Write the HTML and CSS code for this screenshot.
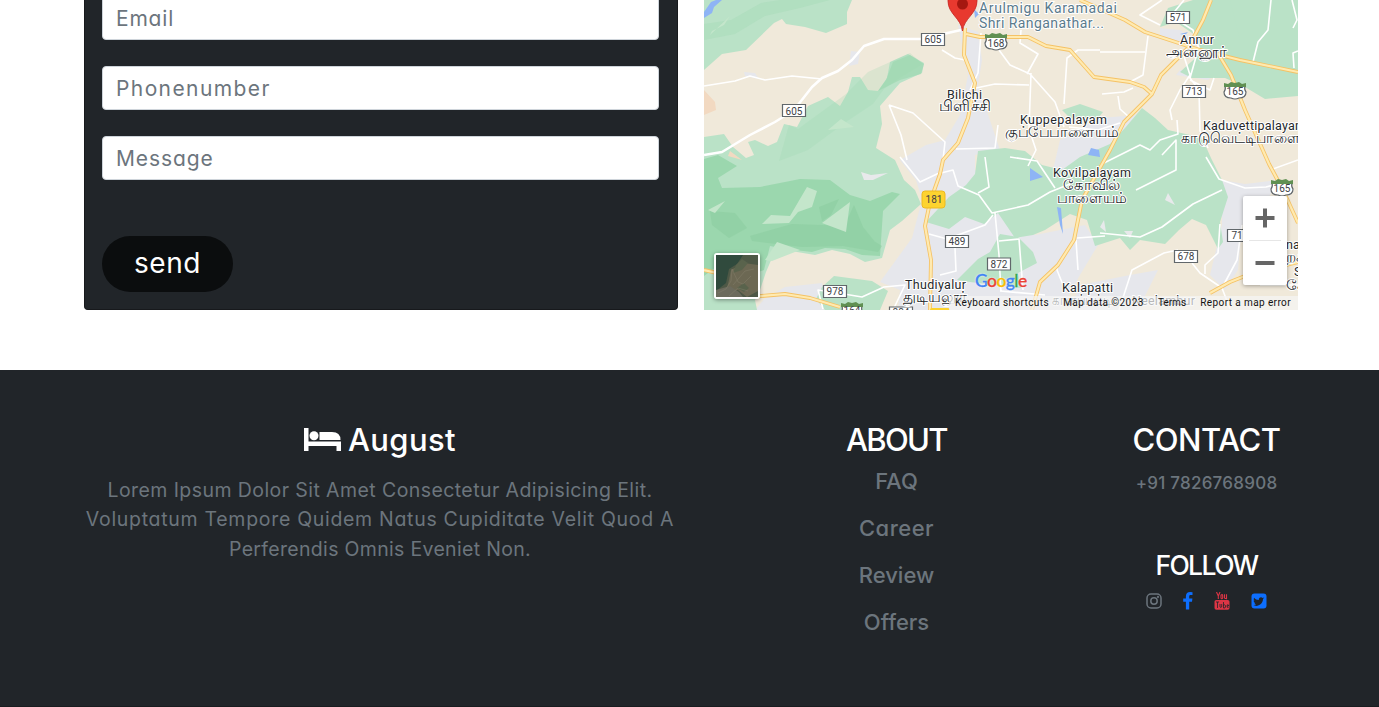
FILE: index.html
```html
<!DOCTYPE html>
<html lang="en">
<head>
<meta charset="utf-8">
<title>August</title>
<link rel="stylesheet" href="styles.css">
</head>
<body>
<main class="contact">
  <form class="contact-form">
    <input class="field field-email" type="email" placeholder="Email">
    <input class="field field-phone" type="text" placeholder="Phonenumber">
    <input class="field field-message" type="text" placeholder="Message">
    <button class="send" type="button">send</button>
  </form>
  <div class="map">
    <svg class="map-canvas" viewBox="704 0 594 310" width="594" height="310">
      <rect x="704" width="594" height="310" fill="#f0e9da"/>
      <!-- urban areas -->
      <g fill="#e6e7ec">
        <path d="M958 25L978 32 982 60 978 85 1000 150 975 155 975 170 1000 190 1035 235 1085 225 1098 245 1080 275 1060 310H898L900 290 880 282 912 238 922 200 916 180 900 160 926 145 945 140 960 115 968 75Z"/>
        <path d="M1060 140L1098 118 1140 115 1150 135 1120 165 1085 180 1052 174Z"/>
        <path d="M1222 180L1245 184 1278 180 1262 210 1242 225 1238 270 1225 290 1210 275 1222 225Z"/>
        <path d="M765 298L785 287 822 283 830 310H755Z"/><path d="M851 51l9 1-2 12-9 2zM744 72l11 1 4 6-14-3zM1080 285l50-10 28-5-20 40h-68z"/>
        <path d="M1160 28L1180 30 1196 42 1180 46 1160 36ZM1180 70l42 0-14 10-32-5z"/>
      </g>
      <!-- forest and parks -->
      <g fill="#bae2c7">
        <path d="M704 0H852L847 12 847 24 826 33 805 27 786 24 782 19 774 23 746 50 722 54 704 70Z"/>
        <path d="M704 137L724 134 733 147 746 158 754 155 748 142 755 140 768 146 777 142 784 124 797 127 808 106 828 97 840 106 848 92 852 77 860 77 868 90 878 91 887 78 890 62 908 54 924 63 922 73 900 83 880 106 882 124 876 148 895 160 904 180 915 190 921 204 902 221 890 230 882 258 865 262 850 254 832 250 815 255 785 250 772 258 766 272 760 290 755 300 757 310H704Z"/>
        <path d="M978 151L1005 148 1025 151 1042 165 1062 170 1080 157 1110 144 1125 128 1142 108 1155 118 1168 130 1190 135 1203 140 1211 158 1222 180 1228 197 1220 222 1223 242 1218 249 1206 225 1192 219 1179 230 1165 244 1140 240 1130 250 1120 238 1095 246 1087 220 1070 214 1045 230 1033 235 1015 238 998 213 984 224 965 217 949 229 926 222 949 197 966 185 975 174Z"/>
        <path d="M1193 0H1298V96L1265 99 1245 87 1225 78 1192 78 1180 72 1202 52 1195 35 1176 22 1160 27 1168 8Z"/>
        <path d="M1062 110L1080 104 1103 112 1095 122 1070 118ZM957 280L978 259 990 252 1000 234 1018 237 1033 252 1037 263 1018 273 1021 288 970 282ZM822 287L834 276 872 281 888 291 880 310H825L816 299ZM1230 0H1298V40H1240Z"/>
      </g>
      <g fill="#9bd7ae">
        <path d="M704 159L718 155 730 162 737 166 718 178 722 188 760 187 790 181 800 179 830 180 850 195 870 201 892 192 900 194 883 211 880 256 862 255 845 249 825 248 812 252 786 249 770 246 764 270 744 277 720 264 704 276Z"/>
        <path d="M789 125L798 129 824 110 846 94 868 72 910 53 923 64 900 78 884 89 873 104 846 122 808 150 779 161Z" opacity=".25"/>
        <path d="M893 62L910 55 924 64 921 74 900 80 878 91 886 80Z" opacity=".6"/>
        <path d="M704 24L731 20 761 3 780 0H830L800 8 765 16 735 34 704 40Z" opacity=".3"/>
      </g>
      <g fill="#89cb9e" opacity=".5"><path d="M750 236L792 224 849 226 882 246 878 252 843 246 802 247 752 241ZM710 211L735 213 747 228 729 238 712 225ZM819 207L839 199 831 215 822 221ZM845 225l9-20 9 22 12 15-28-4z"/></g>
      <g fill="#c4e6cb"><path d="M762 224L771 215 790 216 807 187 817 191 812 207 798 212 789 223ZM822 223L850 202 846 232ZM765 260L777 242 800 250 772 261ZM828 130L841 119 854 127ZM708 210l17-9-10 12zM712 31L724 25 730 16 710 35Z"/></g>
      <g fill="#e8e9eb"><path d="M861 172L871 175 888 173 873 180 864 180ZM1165 200l3-7 7 12zM1124 231h9l-3 7zM1100 227l4-7 2 12z"/></g>
      <path d="M704 90l11 12 1 8-12 5zM730 151l12 9-14-4z" fill="#f2d9c1"/>
      <g fill="#8eb4f5"><path d="M704 18l8-5 2-6 8-7h-6l-5 2-7 10zM1030 168l13 9-13 4zM1057 207l4 1 2 26-3-9zM1088 155l3-7 8 2 1 7zM974 9l5 5-4 4zM1180 34l8-2-3 3z"/></g>
      <!-- minor roads -->
      <g fill="none" stroke="#fff" stroke-width="1.600" stroke-linejoin="round">
        <path d="M704 155L722 152 750 135 775 122 794 110 812 87 822 78 838 71 852 60 864 46 884 39 921 39 961 30" stroke-width="2.500"/>
        <path d="M704 86L735 81 750 76 765 80 792 76 822 79M889 105L901 135 907 160M889 105L913 113 945 142 943 160M942 50L955 58 965 60M981 33L978 73 970 90M999 50L1010 65 1030 74 1055 102 1064 127M1027 74L1038 54 1020 43 1021 30M976 88L995 84 1029 85M1031 73L1029 129 1036 150 1028 166M998 125L995 148 956 149M1064 104L1067 58 1078 50 1100 50M1102 94L1124 92 1133 88M1148 36L1143 75 1130 82M1100 52L1145 52M1118 96L1120 109 1129 117M1182 50L1190 75 1180 90 1170 110 1172 120M1198 50L1190 78 1199 90 1200 131 1208 148M1190 80L1210 90 1214 78M1253 62L1258 42 1268 30 1271 0M1292 0L1297 20 1293 28M1294 68L1293 53 1298 51M1184 0L1171 16 1193 30 1200 52M1162 0L1140 15 1160 25"/>
        <path d="M900 157L920 182 937 174 953 170 958 186 979 195 992 213 1028 205 1050 192 1070 184M985 157L989 187 978 193M1010 157L1037 161 1055 188M995 213L999 255 1001 292M999 241L1019 239 1023 290M929 234L947 239 985 225 993 215M955 248L956 271 940 275M1000 291L1045 295M1065 290L1057 270 1057 266M1100 233L1140 237 1162 227 1193 204 1222 190M1206 157L1219 179 1245 188 1266 187 1277 184M1220 224L1218 253 1205 265 1205 274M1119 310L1132 270 1164 253 1178 250M1192 263L1200 273 1222 288 1237 260 1242 225M1222 288L1230 309M1100 165L1140 145 1150 150 1160 140 1178 134 1177 120M1162 155l14-15v30l-40 20M1298 160L1270 170M1069 127L1098 130 1120 123M1298 285L1260 285M1077 238L1105 236M1076 240L1078 270M893 310L905 285 884 287 862 297 838 293 818 290 823 309"/>
      </g>
      <!-- highways -->
      <g fill="none" stroke-linejoin="round">
        <path id="highways" stroke="#f5c265" stroke-width="3.900" d="M965 28L964 55 975 83 968 118 958 143 943 160 940 174 930 202 925 226 931 260 930 310M966 34L980 37 1028 37 1046 46 1070 50 1094 77 1130 82 1144 87 1152 94M1032 310L1040 282 1058 265 1074 240 1082 200 1110 150 1124 122 1152 94 1161 75 1188 48 1203 20 1211 0M1080 0L1125 20 1145 32 1200 50 1240 60 1298 72M1216 50L1231 75 1245 110 1269 164 1283 190 1298 223M704 270L717 273M750 297L785 294 810 298 840 307M1210 293L1230 282 1250 274 1298 262"/>
        <path stroke="#ffeab0" stroke-width="2.200" d="M965 28L964 55 975 83 968 118 958 143 943 160 940 174 930 202 925 226 931 260 930 310M966 34L980 37 1028 37 1046 46 1070 50 1094 77 1130 82 1144 87 1152 94M1032 310L1040 282 1058 265 1074 240 1082 200 1110 150 1124 122 1152 94 1161 75 1188 48 1203 20 1211 0M1080 0L1125 20 1145 32 1200 50 1240 60 1298 72M1216 50L1231 75 1245 110 1269 164 1283 190 1298 223M704 270L717 273M750 297L785 294 810 298 840 307M1210 293L1230 282 1250 274 1298 262"/>
      </g>
      <!-- route shields -->
      <g fill="#fff" stroke="#61676b" stroke-width="1.200">
        <path d="M782.500 104.500h23v12h-23zM921.500 33.500h23v12h-23zM1166.500 11.500h23v12h-23zM1182.500 85.500h23v12h-23zM945.500 235.500h23v12h-23zM987.500 258h23v12h-23zM823.500 285.500h23v12h-23zM1174.500 250.500h23v12h-23zM1227.500 229.500h23v12h-23zM889.500 307h23v12h-23z"/>
        <path id="us" d="M986 37h20q-1 4 1 6 0 6-7 6-4 2-8 0-7 0-7-6 2-2 1-6z"/>
        <use href="#us" x="239" y="49"/><use href="#us" x="286" y="146"/><use href="#us" x="-144" y="269"/>
      </g>
      <g fill="#609052"><path id="cap" d="M985 34l4 1 3-2 4 1 4-1 3 2 4-1v4h-22z"/><use href="#cap" x="239" y="49"/><use href="#cap" x="286" y="146"/><use href="#cap" x="-144" y="269"/></g>
      <rect x="922" y="191" width="23" height="17" rx="3" fill="#fdd32f" stroke="#edb920"/><rect x="930" y="308" width="20" height="8" rx="2" fill="#fdd32f"/>
      <g class="shield-text">
        <text x="794" y="114.500">605</text><text x="933" y="43">605</text><text x="1178" y="21">571</text><text x="1194" y="95">713</text><text x="957" y="245">489</text><text x="999" y="268">872</text><text x="835" y="295">978</text><text x="1186" y="260">678</text><text x="1237" y="239">71</text><text x="996" y="46.500">168</text><text x="1235" y="95">165</text><text x="1282" y="192">165</text><text x="852" y="314">164</text><text x="934" y="203">181</text><text x="901" y="316">884</text>
      </g>
      <!-- place names -->
      <g class="place">
        <text x="947" y="99" textLength="35">Bilichi</text><text x="1020" y="124" textLength="87">Kuppepalayam</text><text x="1180" y="44" textLength="34">Annur</text><text x="1203" y="130" textLength="103">Kaduvettipalayam</text><text x="1053" y="177" textLength="78">Kovilpalayam</text><text x="905" y="289" textLength="61">Thudiyalur</text><text x="1062" y="292" textLength="51">Kalapatti</text><text x="1132" y="305" textLength="63">Neelambur</text><text x="1286" y="249">na</text><text x="1294" y="276">S</text>
      </g>
      <g class="place tamil">
        <text x="939" y="111" textLength="52" lengthAdjust="spacingAndGlyphs">பிளிச்சி</text>
        <text x="1005" y="137" textLength="114" lengthAdjust="spacingAndGlyphs">குப்பேபாளையம்</text>
        <text x="1166" y="57" textLength="61" lengthAdjust="spacingAndGlyphs">அன்னூர்</text>
        <text x="1181" y="143" textLength="142" lengthAdjust="spacingAndGlyphs">காடுவெட்டிபாளையம்</text>
        <text x="1063" y="190" textLength="57" lengthAdjust="spacingAndGlyphs">கோவில்</text><text x="1057" y="203" textLength="70" lengthAdjust="spacingAndGlyphs">பாளையம்</text>
        <text x="903" y="302" textLength="64" lengthAdjust="spacingAndGlyphs">துடியலூர்</text>
        <text x="1052" y="305" textLength="60" lengthAdjust="spacingAndGlyphs">காளப்பட்டி</text>
        <text x="1286" y="262">றக</text><text x="1286" y="290">சே</text>
      </g>
      <g class="poi"><text x="979" y="13" textLength="138">Arulmigu Karamadai</text><text x="979" y="28" textLength="125">Shri Ranganathar...</text></g>
      <path d="M962.500 31C961 18 948 14 948 1V-4H977V1C977 14 964 18 962.500 31Z" fill="#e8392f" stroke="#c5221f" stroke-width=".8"/><circle cx="962.500" cy="4" r="5.500" fill="#a51710"/>
    </svg>
    <div class="satellite">
      <svg viewBox="0 0 42 42" width="42" height="42">
        <rect width="42" height="42" fill="#4e5846"/>
        <path d="M0 0h27l-6 9-8 5-3 14-10 8z" fill="#304a3d"/><path d="M15 15L28 8 42 10V36L31 42 22 35 10 37 13 25Z" fill="#6c6853"/><path d="M0 35l14-4 9 6 4 5H0z" fill="#6c6b5d"/><path d="M26 4l6 4-6 7-9 3 3-8zM28 28l5 5-5 4-7-4z" fill="#59634c"/>
        <path d="M2 38l8-4 5-8 1-12 6 13 5 2 8-8M17 30l12-14 9-2M13 41l9-8 10 3" fill="none" stroke="#8c8672" stroke-width=".8" opacity=".45"/>
      </svg>
    </div>
    <div class="zoom-controls">
      <svg viewBox="0 0 44 89" width="44" height="89"><path d="M22 12.500v19M12.500 22h19M12.500 67h19" stroke="#666" stroke-width="4"/><path d="M6 44.500h32" stroke="#e6e6e6"/></svg>
    </div>
    <div class="google"><span class="g-blue">G</span><span class="g-red">o</span><span class="g-yellow">o</span><span class="g-blue">g</span><span class="g-green">l</span><span class="g-red">e</span></div>
    <div class="attribution"><span class="a-keys">Keyboard shortcuts</span><span class="a-data">Map data ©2023</span><span class="a-terms">Terms</span><span class="a-report">Report a map error</span></div>
  </div>
</main>
<footer class="footer">
  <section class="brand">
    <h2 class="title"><svg class="bed" viewBox="0 0 37 23" width="37" height="23"><path fill="#fff" d="M0 0h4.500v13.500H37V23h-4.500v-5H4.500v5H0zM15.500 4H28q8.500 0 8.500 8h-21z"/><circle cx="10" cy="7.700" r="4.500" fill="#fff"/></svg><span class="brand-name">August</span></h2>
    <p class="blurb"><span class="b1">Lorem Ipsum Dolor Sit Amet Consectetur Adipisicing Elit.</span><br><span class="b2">Voluptatum Tempore Quidem Natus Cupiditate Velit Quod A</span><br><span class="b3">Perferendis Omnis Eveniet Non.</span></p>
  </section>
  <section class="about">
    <h2 class="title t-about">ABOUT</h2>
    <ul class="links"><li>FAQ</li><li class="l-career">Career</li><li>Review</li><li>Offers</li></ul>
  </section>
  <section class="reach">
    <h2 class="title t-contact">CONTACT</h2>
    <p class="phone">+91 7826768908</p>
    <h3 class="follow">FOLLOW</h3>
    <div class="social">
      <svg viewBox="0 0 16 16" width="16" height="16" fill="none" stroke="#6c757d" stroke-width="1.500"><rect x="1" y="1" width="14" height="14" rx="4"/><circle cx="8" cy="8" r="3.200"/><circle cx="12" cy="4" r=".4"/></svg>
      <svg viewBox="0 0 10 18" width="10" height="18"><path fill="#0d6efd" d="M9.500.2v2.900H7.700C6.400 3.100 6.200 3.700 6.200 4.600v2H9.400L9 9.800H6.200V17.500H2.900V9.800H.2V6.600H2.900V4.200C2.900 1.500 4.500 0 7 0z"/></svg>
      <svg viewBox="0 0 16 18" width="16" height="18"><rect x=".5" y="8" width="15" height="9.700" rx="1.800" fill="#dc3545"/><path d="M2.500 0l1.800 4v3M6 0L4.300 4M7 3.200q1.500-1.400 1.700.5v2q-.4 2-1.700.4zM10.500 2.300v3.500q.5 1.500 2 0V2.300v5" fill="none" stroke="#dc3545" stroke-width="1.100"/><path d="M2 10h3M3.500 10v6M6 12v3q.5 1 1.700 0v-3M9.500 10v6q2 .3 2-1v-1.500q-.5-1.500-2 0M14.500 15.500q-1.500.5-1.500-1.500t1.500-1v1H13" fill="none" stroke="#212529" stroke-width=".8"/></svg>
      <svg viewBox="0 0 16 16" width="16" height="16"><rect x=".5" y=".5" width="15" height="15" rx="3" fill="#0d6efd"/><path fill="#212529" d="M13.300 4.800l-1.300 1.300c0 4.200-3.500 6.800-6.700 6.800-1 0-2-.3-2.900-.8 1.200.1 2-.2 2.900-.8-.9-.1-1.700-.7-2-1.600h1C3.200 9.300 2.600 8.600 2.600 7.400l1 .3C2.700 7 2.500 5.900 3.100 4.700c1.200 1.400 2.700 2.200 4.700 2.300-.3-2.100 2-3.600 3.800-2.100L13 4.300l-.9 1.100z"/></svg>
    </div>
  </section>
</footer>
</body>
</html>
```
FILE: styles.css
```css
* { box-sizing: border-box; }
body { margin: 0; height: 707px; overflow: hidden; background: #fff; font-family: Inter, "Open Sans", sans-serif; font-feature-settings: "cv11"; }
h2, h3, p, ul { margin: 0; padding: 0; }
.contact { height: 370px; padding-left: 84px; display: flex; align-items: flex-start; gap: 26px; }
.contact-form { width: 594px; height: 310px; padding: 0 18px; display: flex; flex-direction: column; align-items: flex-start; background: #212529; border-radius: 0 0 4px 4px; border: 1px solid #17191c; border-top: 0; }
.field { width: 557px; height: 44px; flex: none; margin: 0 0 26px -1px; padding: 0 13px; border: 1px solid #ced4da; border-radius: 4px; font: 21px Inter, sans-serif; font-feature-settings: "cv11"; background: #fff; outline: 0; }
.field:first-child { margin-top: -4px; }
.field::placeholder { color: #6c757d; opacity: 1; }
.field-email { letter-spacing: .8px; }
.field-phone { letter-spacing: 1.400px; }
.field-message { letter-spacing: .9px; }
.send { width: 131px; height: 56px; margin: 30px 0 0 -1px; padding: 0 0 2px; border: 0; border-radius: 28px; background: #0b0d0e; color: #fff; font: 28px Inter, sans-serif; letter-spacing: .6px; font-feature-settings: "cv11"; }
.map { position: relative; width: 594px; height: 310px; overflow: hidden; }
.map-canvas { display: block; }
.shield-text { font: 10px Roboto, sans-serif; fill: #3e4246; text-anchor: middle; }
.place { font: 12.500px Roboto, sans-serif; fill: #25282b; stroke: #fff; stroke-width: 2px; paint-order: stroke; stroke-linejoin: round; }
.tamil { font-size: 15px; font-weight: 500; }
.poi { font: 14px Roboto, sans-serif; fill: #5b7b8d; stroke: #fff; stroke-width: 2px; paint-order: stroke; }
.satellite { position: absolute; left: 10px; top: 253px; width: 46px; height: 46px; border: 2px solid #fff; border-radius: 3px; box-shadow: 0 1px 4px #0006; }
.satellite svg { display: block; }
.zoom-controls { position: absolute; left: 539px; top: 196px; width: 44px; height: 89px; background: #fff; border-radius: 2px; box-shadow: 0 1px 4px #0005; }
.google { position: absolute; left: 271px; top: 270px; font: 500 17.500px/22px Lato, sans-serif; letter-spacing: -.6px; -webkit-text-stroke: .3px; text-shadow: 0 0 2px #fff; }
.g-blue { color: #4285f4; }
.g-red { color: #ea4335; }
.g-yellow { color: #fbbc05; }
.g-green { color: #34a853; }
.attribution { position: absolute; right: 0; bottom: 0; width: 349px; height: 14px; padding: 0 7px 0 6px; display: flex; justify-content: space-between; background: #f5f5f5b3; color: #111; font: 10px/14px Roboto, sans-serif; white-space: nowrap; }
.a-keys, .a-data, .a-report { letter-spacing: .4px; }
.footer { height: 337px; padding: 51px 0 0 70px; display: flex; background: #212529; color: #6c757d; text-align: center; border-bottom: 1px solid #191c1f; }
.brand { width: 620px; }
.about { width: 413px; }
.reach { width: 207px; }
.title { color: #fff; font-size: 31px; line-height: 38px; font-weight: 500; }
.brand-name { letter-spacing: .4px; }
.t-about { letter-spacing: -1.700px; }
.t-contact { letter-spacing: -.45px; }
.bed { margin-right: 7px; vertical-align: 0; }
.blurb { margin-top: 17px; font-size: 19.500px; line-height: 29.300px; white-space: nowrap; }
.b1 { letter-spacing: .42px; }
.b2 { letter-spacing: .7px; }
.b3 { letter-spacing: .32px; }
.links { margin-top: -1px; list-style: none; font-size: 22px; font-weight: 500; line-height: 47px; }
.l-career { letter-spacing: .5px; }
.phone { font-size: 17px; font-weight: 500; line-height: 24px; margin-top: 12px; letter-spacing: .25px; }
.follow { margin-top: 52px; color: #fff; font-size: 26.500px; line-height: 36px; font-weight: 500; letter-spacing: -1.600px; }
.social { display: flex; justify-content: center; align-items: center; gap: 21px; margin-top: 9px; height: 18px; }
```
